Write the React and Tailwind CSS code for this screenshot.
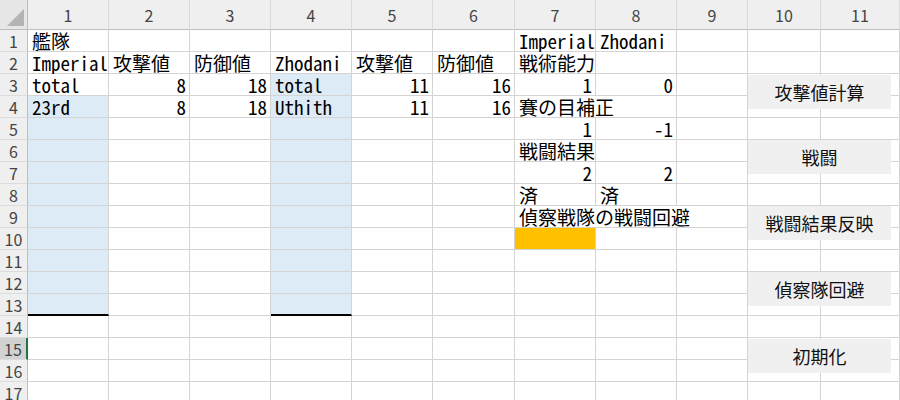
import React from 'react'

const cols = [1, 2, 3, 4, 5, 6, 7, 8, 9, 10, 11]

// cell contents keyed by "row-col"
const cells = {
  '1-1': { t: '艦隊' },
  '1-7': { t: 'Imperial' },
  '1-8': { t: 'Zhodani' },
  '2-1': { t: 'Imperial' },
  '2-2': { t: '攻撃値' },
  '2-3': { t: '防御値' },
  '2-4': { t: 'Zhodani' },
  '2-5': { t: '攻撃値' },
  '2-6': { t: '防御値' },
  '2-7': { t: '戦術能力' },
  '3-1': { t: 'total' },
  '3-2': { t: '8', r: true },
  '3-3': { t: '18', r: true },
  '3-4': { t: 'total' },
  '3-5': { t: '11', r: true },
  '3-6': { t: '16', r: true },
  '3-7': { t: '1', r: true },
  '3-8': { t: '0', r: true },
  '4-1': { t: '23rd' },
  '4-2': { t: '8', r: true },
  '4-3': { t: '18', r: true },
  '4-4': { t: 'Uthith' },
  '4-5': { t: '11', r: true },
  '4-6': { t: '16', r: true },
  '4-7': { t: '賽の目補正', span: 2 },
  '5-7': { t: '1', r: true },
  '5-8': { t: '-1', r: true },
  '6-7': { t: '戦闘結果' },
  '7-7': { t: '2', r: true },
  '7-8': { t: '2', r: true },
  '8-7': { t: '済' },
  '8-8': { t: '済' },
  '9-7': { t: '偵察戦隊の戦闘回避', span: 3 },
}

const buttons = [
  { label: '攻撃値計算', top: 'top-[75px]' },
  { label: '戦闘', top: 'top-[140px]' },
  { label: '戦闘結果反映', top: 'top-[206px]' },
  { label: '偵察隊回避', top: 'top-[272px]' },
  { label: '初期化', top: 'top-[339px]' },
]

function cellBg(r, c) {
  if (r === 10 && c === 7) return 'bg-[#ffc000]'
  if (c === 1 && r >= 4 && r <= 13) return 'bg-[#ddebf7]'
  if (c === 4 && r >= 3 && r <= 13) return 'bg-[#ddebf7]'
  return 'bg-white'
}

function Row({ r }) {
  const out = []
  let skip = 0
  cols.forEach((c) => {
    if (skip > 0) {
      skip--
      return
    }
    const d = cells[`${r}-${c}`]
    const thick = r === 13 && (c === 1 || c === 4)
    const span = d?.span === 3 ? 'col-span-3' : d?.span === 2 ? 'col-span-2' : ''
    if (d?.span) skip = d.span - 1
    out.push(
      <div
        key={c}
        className={`${span} ${cellBg(r, c)} ${thick ? 'border-b-2 border-b-black' : 'border-b border-b-[#d4d4d4]'} border-r border-r-[#d4d4d4] flex items-end pb-[1px] ${d?.r ? 'justify-end pr-[3px]' : 'justify-start pl-[4px]'}`}
      >
        {d && <span className="whitespace-nowrap leading-[19px] text-[19px] text-black">{d.t}</span>}
      </div>
    )
  })
  const selected = r === 15
  return (
    <>
      <div
        className={`${selected ? 'bg-[#d2d2d2] border-r-2 border-r-[#217346]' : 'bg-[#efefef] border-r border-r-[#bdbdbd]'} border-b border-b-[#dcdcdc] flex items-center justify-center leading-[18px] text-[16px] text-[#444] font-['Noto_Sans_CJK_JP',sans-serif]`}
      >
        {r}
      </div>
      {out}
      <div className="bg-white border-b border-b-[#d4d4d4]" />
    </>
  )
}

export default function App() {
  const rows = Array.from({ length: 17 }, (_, i) => i + 1)
  return (
    <div className="relative w-[900px] h-[400px] overflow-hidden bg-white font-['Noto_Sans_Mono_CJK_JP','Noto_Sans_CJK_JP',monospace]">
      <div className="grid grid-cols-[28px_81px_81px_81px_81px_81px_82px_81px_81px_71px_73px_79px_1fr] grid-rows-[30px] auto-rows-[22px]">
        {/* corner */}
        <div className="relative bg-[#e6e6e6] border-b border-b-[#bdbdbd] border-r border-r-[#bdbdbd]">
          <div className="absolute right-[3px] bottom-[3px] w-0 h-0 border-l-[17px] border-l-transparent border-b-[17px] border-b-[#b4b4b4]" />
        </div>
        {cols.map((c) => (
          <div
            key={c}
            className="bg-[#efefef] border-b border-b-[#bdbdbd] border-r border-r-[#dadada] flex items-center justify-center text-[16px] text-[#444] font-['Noto_Sans_CJK_JP',sans-serif]"
          >
            {c}
          </div>
        ))}
        <div className="bg-[#efefef] border-b border-b-[#bdbdbd]" />
        {rows.map((r) => (
          <Row key={r} r={r} />
        ))}
      </div>

      {/* form buttons */}
      {buttons.map((b) => (
        <button
          key={b.label}
          className={`absolute left-[748px] ${b.top} w-[143px] h-[34px] bg-[#f0f0f0] flex items-center justify-center text-[18px] text-[#111] font-['Noto_Sans_CJK_JP',sans-serif]`}
        >
          {b.label}
        </button>
      ))}
    </div>
  )
}
